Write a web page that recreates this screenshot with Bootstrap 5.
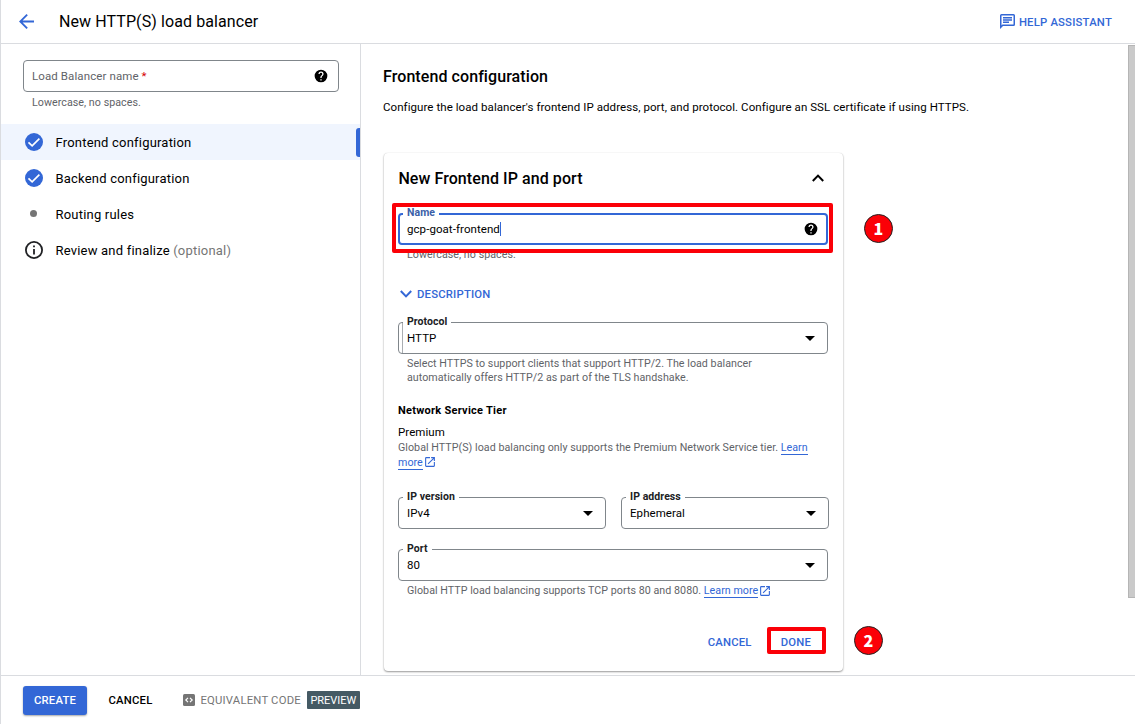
<!DOCTYPE html>
<html lang="en">
<head>
<meta charset="utf-8">
<meta name="viewport" content="width=device-width, initial-scale=1">
<title>New HTTP(S) load balancer</title>
<link href="https://cdn.jsdelivr.net/npm/bootstrap@5.3.0/dist/css/bootstrap.min.css" rel="stylesheet">
<style>
  :root { --blue: #3367d6; --line: #dadce0; --muted: #5f6368; --field: #80868b; }
  body { font-family: Roboto, sans-serif; color: #000; font-size: 11.5px; line-height: 14px; letter-spacing: .07px; background: #fff; }
  svg { display: block; flex: none; }
  .shell { height: 724px; border-left: 1px solid var(--line); overflow: hidden; }
  .topbar { height: 44px; border-bottom: 1px solid var(--line); padding: 0 23px 0 18px; }
  .topbar h1 { font-size: 16px; font-weight: 400; line-height: 20px; margin: 0 0 0 25px; letter-spacing: .09px; }
  .blue { color: var(--blue); }
  .caps { font-size: 11.3px; font-weight: 500; line-height: 14px; letter-spacing: .2px; }
  .caps > span { padding-top: 1px; }
  .drop { padding-top: 2px !important; }
  .sidebar { width: 360px; border-right: 1px solid var(--line); padding-top: 16px; }
  .lb-name { margin: 0 21px 0 22px; }
  .field { height: 32px; border: 1px solid var(--field); border-radius: 4px; padding: 0 9px 0 8px; }
  .field.focused { border: 2px solid var(--blue); padding: 0 8px 0 7px; }
  .field.notched::before { content: ""; position: absolute; left: 3px; top: 0; bottom: 0; width: 1px; background: #a9adb1; }
  .flabel { position: absolute; top: -8px; left: 4px; padding: 0 4px; background: #fff; font-size: 10.5px; font-weight: 700; line-height: 14px; color: #202124; }
  .focused .flabel { top: -9px; left: 3px; color: #3b5fa8; }
  .hint { font-size: 10.7px; line-height: 14px; color: var(--muted); padding-left: 9px; letter-spacing: .04px; }
  .step { height: 36px; padding: 0 0 0 24px; font-size: 13px; letter-spacing: .2px; gap: 12.5px; }
  .step > span:last-child { padding-top: 1px; }
  .step.current { background: #f0f5fe; }
  .step.current::after { content: ""; position: absolute; right: 0; top: 4px; width: 4px; height: 29px; background: var(--blue); border-radius: 3px 0 0 3px; }
  .dot { width: 7px; height: 7px; border-radius: 50%; background: #757575; margin: 0 6.5px 2px 4.5px; }
  .main { padding: 23px 0 0 22px; }
  h2 { font-size: 16px; font-weight: 500; line-height: 20px; margin: 0; letter-spacing: .08px; }
  .panel { width: 459px; height: 518px; margin: 39px 0 0 1px; padding: 0 15px 0 14px; border-radius: 4px; box-shadow: 0 1px 2px rgba(0,0,0,.4), 0 0 1px rgba(0,0,0,.15); }
  .panel-head { height: 50px; margin-bottom: 10px; padding-right: 4px; }
  .mark-box { position: absolute; border: 4px solid #fb0007; border-radius: 2px; }
  .pin { position: absolute; width: 29px; height: 29px; border-radius: 50%; border: 1px solid #222; background: #fb0007; color: #fff; font: 900 16px/27px "Noto Sans CJK JP", sans-serif; text-align: center; }
  .learn { color: var(--blue); text-decoration: none; border-bottom: 1px solid var(--blue); }
  .learn + svg { margin: 1px 0 0 1px; }
  .cursor { width: 1px; height: 14px; background: var(--blue); }
  .arrow { width: 0; height: 0; border: 5px solid transparent; border-top-color: #000; border-bottom: 0; margin-right: 3px; }
  .scroll-thumb { width: 7px; height: 553px; margin-top: 1px; background: #cacaca; border: 1px solid #b5b5b5; border-right: 0; }
  .footerbar { height: 49px; border-top: 1px solid var(--line); padding-left: 22px; }
  .create { width: 64px; height: 29px; background: var(--blue); color: #fff; border-radius: 3px; box-shadow: 0 1px 2px rgba(0,0,0,.35); }
  .preview { width: 53px; height: 18px; background: #455a64; color: #fff; border-radius: 1px; font-size: 11px; letter-spacing: 0; }
</style>
</head>
<body>
<svg class="d-none">
  <symbol id="help" viewBox="0 0 24 24"><path d="M12 2a10 10 0 1 0 0 20 10 10 0 0 0 0-20zm1 17h-2v-2h2v2zm2.07-7.75-.9.92C13.45 12.9 13 13.5 13 15h-2v-.5c0-1.1.45-2.1 1.17-2.83l1.24-1.26c.37-.36.59-.86.59-1.41a2 2 0 1 0-4 0H8a4 4 0 1 1 8 0c0 .88-.36 1.68-.93 2.25z"/></symbol>
  <symbol id="check" viewBox="0 0 24 24"><circle cx="12" cy="12" r="12" fill="#3367d6"/><path d="M4.6 12.4l4.9 4.7L19.2 7.4" fill="none" stroke="#fff" stroke-width="2.2"/></symbol>
  <symbol id="open" viewBox="0 0 24 24"><path d="M19 19H5V5h7V3H5a2 2 0 0 0-2 2v14a2 2 0 0 0 2 2h14a2 2 0 0 0 2-2v-7h-2v7zM14 3v2h3.59l-9.83 9.83 1.41 1.41L19 6.41V10h2V3h-7z"/></symbol>
</svg>
<div class="shell d-flex flex-column">
  <header class="topbar d-flex align-items-center flex-shrink-0">
    <svg width="15" height="15" viewBox="4 4 16 16" fill="#3367d6"><path d="M20 11H7.83l5.59-5.59L12 4l-8 8 8 8 1.41-1.41L7.83 13H20v-2z"/></svg>
    <h1>New HTTP(S) load balancer</h1>
    <div class="ms-auto d-flex align-items-center gap-1 blue caps">
      <svg width="15" height="15" viewBox="2 2 20 20" fill="currentColor"><path d="M4 4h16v12H5.17L4 17.17V4m0-2a2 2 0 0 0-2 2v18l4-4h14a2 2 0 0 0 2-2V4a2 2 0 0 0-2-2H4zm2 10h8v2H6v-2zm0-3h12v2H6V9zm0-3h12v2H6V6z"/></svg>
      <span class="drop">HELP ASSISTANT</span>
    </div>
  </header>

  <div class="d-flex flex-grow-1" style="min-height:0">
    <aside class="sidebar flex-shrink-0">
      <div class="field lb-name d-flex align-items-center justify-content-between">
        <span style="color:#5f6368;letter-spacing:.1px">Load Balancer name <span style="color:#d50000">*</span></span>
        <svg style="margin-right:1px" width="14" height="14" viewBox="1 1 22 22"><use href="#help" width="24" height="24"/></svg>
      </div>
      <div class="hint" style="margin:4px 0 14px 22px">Lowercase, no spaces.</div>
      <div class="step current position-relative d-flex align-items-center"><svg width="18" height="18"><use href="#check"/></svg><span>Frontend configuration</span></div>
      <div class="step d-flex align-items-center"><svg width="18" height="18"><use href="#check"/></svg><span>Backend configuration</span></div>
      <div class="step d-flex align-items-center"><span class="dot"></span><span>Routing rules</span></div>
      <div class="step d-flex align-items-center"><svg width="18" height="18" viewBox="2 2 20 20" fill="#202124"><path d="M11 7h2v2h-2V7zm0 4h2v6h-2v-6zm1-9a10 10 0 1 0 0 20 10 10 0 0 0 0-20zm0 18a8 8 0 1 1 0-16 8 8 0 0 1 0 16z"/></svg><span>Review and finalize <span style="color:#757575">(optional)</span></span></div>
    </aside>

    <main class="main flex-grow-1">
      <h2>Frontend configuration</h2>
      <div style="margin-top:13px">Configure the load balancer's frontend IP address, port, and protocol. Configure an SSL certificate if using HTTPS.</div>

      <section class="panel position-relative">
        <div class="panel-head d-flex align-items-center justify-content-between">
          <h2 class="pt-1" style="margin:-2px 0 0 .4px">New Frontend IP and port</h2>
          <svg width="12" height="8" viewBox="0 0 12 8" fill="none" stroke="#000" stroke-width="2"><path d="M.8 7 6 1.6 11.2 7"/></svg>
        </div>
        <div class="field focused position-relative d-flex align-items-center">
          <span class="flabel">Name</span>
          <span>gcp-goat-frontend</span><span class="cursor"></span>
          <svg class="ms-auto" width="14" height="14" viewBox="1 1 22 22"><use href="#help" width="24" height="24"/></svg>
        </div>
        <div class="hint" style="margin-top:3px">Lowercase, no spaces.</div>
        <div class="d-flex align-items-center blue caps" style="height:20px;margin-top:22px;padding-left:2px;gap:5px">
          <svg width="12" height="8" viewBox="0 0 12 8" fill="none" stroke="currentColor" stroke-width="2"><path d="M.8 1 6 6.4 11.2 1"/></svg><span>DESCRIPTION</span>
        </div>
        <div class="field notched position-relative d-flex align-items-center" style="margin-top:18px">
          <span class="flabel">Protocol</span><span>HTTP</span><span class="arrow ms-auto"></span>
        </div>
        <div class="hint" style="margin-top:3px">Select HTTPS to support clients that support HTTP/2. The load balancer<br>automatically offers HTTP/2 as part of the TLS handshake.</div>
        <div class="fw-bold" style="font-size:11px;line-height:16px;margin-top:18px;letter-spacing:.26px">Network Service Tier</div>
        <div style="line-height:15px;margin-top:6px">Premium</div>
        <div class="hint p-0" style="line-height:15px">Global HTTP(S) load balancing only supports the Premium Network Service tier. <a class="learn" href="#">Learn</a><br><span class="d-flex" style="height:15px"><a class="learn" href="#">more</a><svg width="12" height="12" viewBox="1 1 22 22" fill="#3367d6"><use href="#open" width="24" height="24"/></svg></span></div>
        <div class="d-flex" style="margin:27px -1px 0 0;gap:15px">
          <div class="field position-relative d-flex align-items-center flex-fill w-50"><span class="flabel">IP version</span>IPv4<span class="arrow ms-auto"></span></div>
          <div class="field position-relative d-flex align-items-center flex-fill w-50"><span class="flabel">IP address</span>Ephemeral<span class="arrow ms-auto"></span></div>
        </div>
        <div class="field position-relative d-flex align-items-center" style="margin-top:20px"><span class="flabel">Port</span>80<span class="arrow ms-auto"></span></div>
        <div class="hint d-flex" style="margin-top:3px;height:14px">Global HTTP load balancing supports TCP ports 80 and 8080.&nbsp;<a class="learn" href="#">Learn more</a><svg width="12" height="12" viewBox="1 1 22 22" fill="#3367d6"><use href="#open" width="24" height="24"/></svg></div>
        <div class="d-flex align-items-center justify-content-end blue caps" style="height:27px;margin-top:30px;padding-right:17px;gap:29px"><span class="drop">CANCEL</span><span class="drop">DONE</span></div>

        <div class="mark-box" style="left:8px;top:50px;width:441px;height:50px"></div>
        <div class="mark-box" style="left:383px;top:474px;width:59px;height:27px"></div>
        <div class="pin" style="left:480px;top:61px">1</div>
        <div class="pin" style="left:470px;top:473px">2</div>
      </section>
    </main>
    <div class="scroll-thumb flex-shrink-0"></div>
  </div>

  <footer class="footerbar d-flex align-items-center flex-shrink-0 caps">
    <div class="create d-flex align-items-center justify-content-center"><span class="drop">CREATE</span></div>
    <span style="margin-left:21.5px">CANCEL</span>
    <svg style="margin-left:31px" width="12" height="12" viewBox="0 0 12 12"><rect width="12" height="12" rx="1.5" fill="#757575"/><path d="M5 3.8 2.8 6 5 8.2M7 3.8 9.2 6 7 8.2" fill="none" stroke="#fff" stroke-width="1.2"/></svg>
    <span style="margin-left:5px;color:#757575" class="fw-normal">EQUIVALENT CODE</span>
    <div class="preview d-flex align-items-center justify-content-center fw-normal" style="margin-left:6px"><span class="drop">PREVIEW</span></div>
  </footer>
</div>
<script src="https://cdn.jsdelivr.net/npm/bootstrap@5.3.0/dist/js/bootstrap.bundle.min.js"></script>
</body>
</html>
